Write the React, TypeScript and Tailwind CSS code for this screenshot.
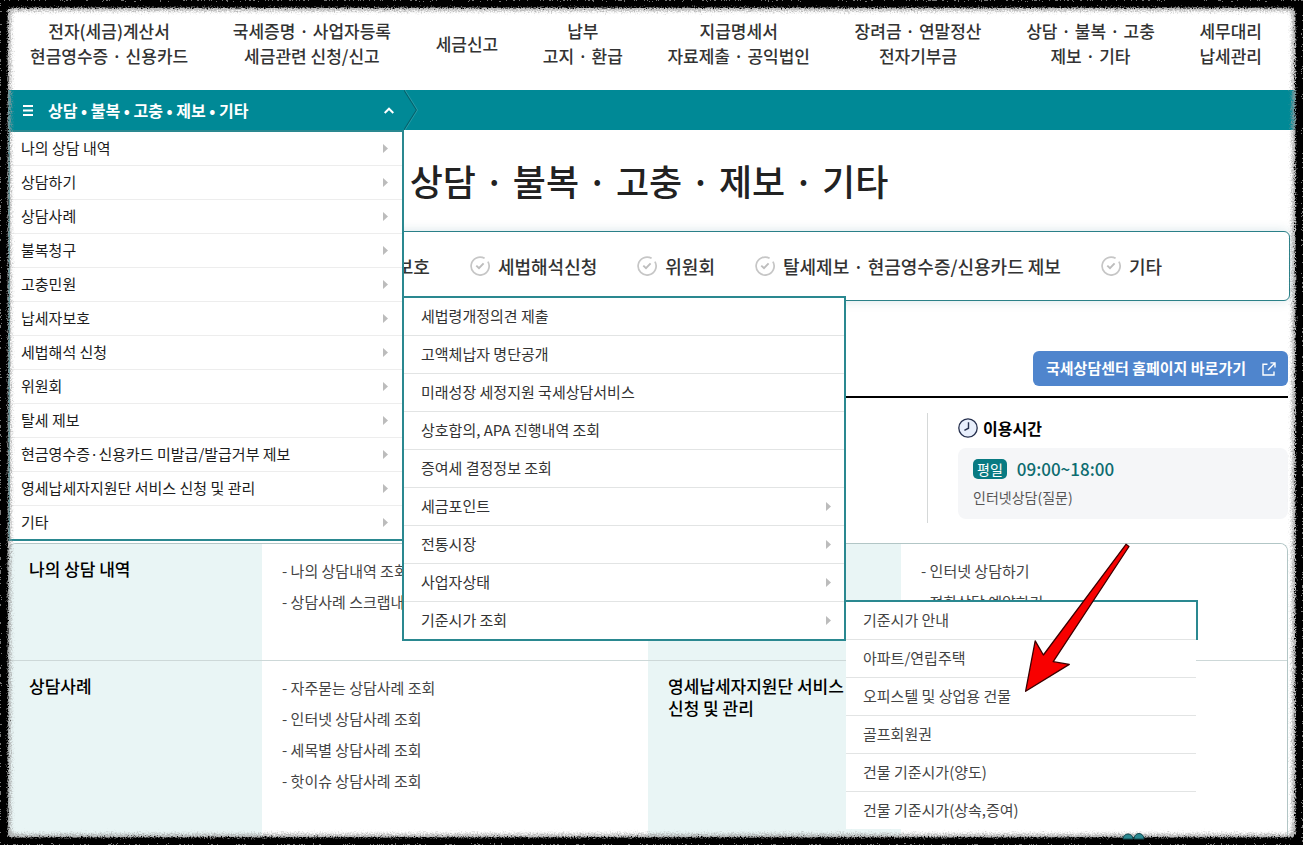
import React from 'react';

type Entry = { label: string; more?: boolean };

const NAV: string[][] = [
  ['전자(세금)계산서', '현금영수증 · 신용카드'],
  ['국세증명 · 사업자등록', '세금관련 신청/신고'],
  ['세금신고'],
  ['납부', '고지 · 환급'],
  ['지급명세서', '자료제출 · 공익법인'],
  ['장려금 · 연말정산', '전자기부금'],
  ['상담 · 불복 · 고충', '제보 · 기타'],
  ['세무대리', '납세관리'],
];

const MENU: string[] = [
  '나의 상담 내역',
  '상담하기',
  '상담사례',
  '불복청구',
  '고충민원',
  '납세자보호',
  '세법해석 신청',
  '위원회',
  '탈세 제보',
  '현금영수증·신용카드 미발급/발급거부 제보',
  '영세납세자지원단 서비스 신청 및 관리',
  '기타',
];

const SUBMENU: Entry[] = [
  { label: '세법령개정의견 제출' },
  { label: '고액체납자 명단공개' },
  { label: '미래성장 세정지원 국세상담서비스' },
  { label: '상호합의, APA 진행내역 조회' },
  { label: '증여세 결정정보 조회' },
  { label: '세금포인트', more: true },
  { label: '전통시장', more: true },
  { label: '사업자상태', more: true },
  { label: '기준시가 조회', more: true },
];

const LEAVES: string[] = [
  '기준시가 안내',
  '아파트/연립주택',
  '오피스텔 및 상업용 건물',
  '골프회원권',
  '건물 기준시가(양도)',
  '건물 기준시가(상속,증여)',
];

const TABS: string[] = ['납세자보호', '세법해석신청', '위원회', '탈세제보 · 현금영수증/신용카드 제보', '기타'];

function Triangle() {
  return (
    <svg className="h-[9px] w-[5px] shrink-0" viewBox="0 0 5 9" aria-hidden="true">
      <path d="M0 0 L5 4.5 L0 9 Z" fill="#bcbcbc" />
    </svg>
  );
}

function CheckCircle() {
  return (
    <svg className="size-5 shrink-0" viewBox="0 0 20 20" fill="none" aria-hidden="true">
      <path d="M17.9 5.6 A9 9 0 1 1 14.6 2.3" stroke="#c6c6c6" strokeWidth="1.7" />
      <path d="M6.3 9.6 L9 12.2 L13.6 7.4" stroke="#bdbdbd" strokeWidth="1.9" />
    </svg>
  );
}

function LeafMenu() {
  return (
    <ul className="absolute top-[302px] left-[442px] w-[352px] border-t-2 border-[#2a8890]">
      {LEAVES.map((label, i) => (
        <li key={label} className={i === 0 ? 'border-r-2 border-[#2a8890]' : 'pr-0.5'}>
          <a
            href="#"
            className={
              'flex items-center bg-white pl-[17px] text-[15px] text-[#444] ' +
              (i < LEAVES.length - 1 ? 'h-[38px] border-b border-[#e2e4e4]' : 'h-[37px]')
            }
          >
            {label}
          </a>
        </li>
      ))}
    </ul>
  );
}

function SubMenu() {
  return (
    <div className="absolute top-[164px] left-full w-[444px] border-2 border-[#2a8890] bg-white">
      <ul className="text-[15px] text-[#333]">
        {SUBMENU.map((entry) => (
          <li key={entry.label} className="border-b border-[#e2e4e4] last:border-b-0">
            <a href="#" className="flex h-[37px] items-center justify-between pr-[13px] pl-[17px]">
              {entry.label}
              {entry.more && <Triangle />}
            </a>
          </li>
        ))}
      </ul>
      <LeafMenu />
    </div>
  );
}

function SideMenu() {
  return (
    <div className="absolute top-full left-0 z-10 w-[396px] border-2 border-[#2a8890] bg-white">
      <ul className="text-[15px] text-[#1c1c1c]">
        {MENU.map((label) => (
          <li key={label} className="border-b border-[#ededed] last:border-b-0">
            <a href="#" className="flex h-[33px] items-center justify-between pr-[14px] pl-[11px]">
              {label}
              <Triangle />
            </a>
          </li>
        ))}
      </ul>
      <SubMenu />
    </div>
  );
}

function Cell({ title, items }: { title: string; items: string[] }) {
  return (
    <div className="grid grid-cols-[253px_1fr]">
      <h2 className="bg-[#e9f5f5] px-5 pt-[14px] text-[17px] leading-[22px] font-medium whitespace-pre text-black">
        {title}
      </h2>
      <ul className="bg-white pt-[11px] pl-5 text-[15px] leading-[31px] text-[#444]">
        {items.map((item) => (
          <li key={item}>- {item}</li>
        ))}
      </ul>
    </div>
  );
}

function TornEdge() {
  return (
    <svg className="pointer-events-none absolute inset-0 z-30 h-full w-full" aria-hidden="true">
      <defs>
        <filter id="rough" x="0" y="0" width="100%" height="100%" colorInterpolationFilters="sRGB">
          <feTurbulence type="fractalNoise" baseFrequency="0.7" numOctaves="2" seed="4" result="n" />
          <feGaussianBlur in="SourceGraphic" stdDeviation="0.6" result="b" />
          <feDisplacementMap in="b" in2="n" scale="7" xChannelSelector="R" yChannelSelector="G" />
        </filter>
        <filter id="haze" x="0" y="0" width="100%" height="100%" colorInterpolationFilters="sRGB">
          <feGaussianBlur in="SourceGraphic" stdDeviation="1.6" result="b" />
          <feTurbulence type="fractalNoise" baseFrequency="0.7" numOctaves="2" seed="9" result="n" />
          <feDisplacementMap in="b" in2="n" scale="8" xChannelSelector="R" yChannelSelector="G" />
        </filter>
      </defs>
      <rect width="100%" height="100%" rx="16" fill="none" stroke="#9c9c9c" strokeOpacity="0.75" strokeWidth="22" filter="url(#haze)" />
      <rect width="100%" height="100%" rx="12" fill="none" stroke="#000" strokeWidth="15" filter="url(#rough)" />
    </svg>
  );
}

export default function App() {
  return (
    <div className="relative h-screen overflow-hidden bg-black py-2 pr-[7px] pl-2 font-['Noto_Sans_CJK_KR','Noto_Sans',sans-serif]">
      <div className="relative flex h-full flex-col overflow-hidden bg-white">
        <header className="h-[82px] shrink-0 pt-[10px]">
          <nav className="flex h-[50px] items-center justify-between pr-[34px] pl-[22px]">
            {NAV.map((lines) => (
              <a
                key={lines[0]}
                href="#"
                className="text-center text-[17px] leading-[25px] font-medium whitespace-nowrap text-[#333]"
              >
                {lines.map((line) => (
                  <span key={line} className="block">
                    {line}
                  </span>
                ))}
              </a>
            ))}
          </nav>
        </header>

        <div className="relative flex h-10 shrink-0 bg-[#008996]">
          <button className="flex w-[396px] items-center pr-[10px] pl-[15px] text-white">
            <svg className="h-[11px] w-[10px]" viewBox="0 0 10 11" aria-hidden="true">
              <path d="M0 1 H10 M0 5.5 H10 M0 10 H10" stroke="#fff" strokeWidth="2" />
            </svg>
            <span className="ml-[15px] flex-1 text-left text-base font-bold">상담 • 불복 • 고충 • 제보 • 기타</span>
            <svg className="h-[7px] w-[10px]" viewBox="0 0 10 7" fill="none" aria-hidden="true">
              <path d="M0.7 6 L5 1.7 L9.3 6" stroke="#fff" strokeWidth="2" />
            </svg>
          </button>
          <svg className="h-10 w-[14px]" viewBox="0 0 14 40" fill="none" aria-hidden="true">
            <path d="M0 0 L12.5 20 L0 40" stroke="#06626c" strokeWidth="1.2" />
            <path d="M1 0 L13.5 20 L1 40" stroke="#3aa6b0" strokeWidth="0.7" />
          </svg>
          <SideMenu />
        </div>

        <main className="flex min-h-0 flex-1 flex-col">
          <h1 className="mr-[6px] flex h-[101px] shrink-0 justify-center pt-5 text-4xl leading-[60px] font-medium text-[#222]">
            상담 · 불복 · 고충 · 제보 · 기타
          </h1>
          <nav className="mr-[6px] flex h-[70px] shrink-0 items-center justify-end gap-10 rounded-md border border-[#2a8088] bg-white pr-[127px] text-lg font-medium text-[#333] shadow-[0_0_12px_rgba(0,90,110,0.16)]">
            {TABS.map((tab) => (
              <a key={tab} href="#" className="flex items-center gap-2 whitespace-nowrap">
                <CheckCircle />
                {tab}
              </a>
            ))}
          </nav>

          <section className="mt-[50px] mr-2 flex shrink-0 flex-col">
            <a
              href="#"
              className="flex h-[35px] items-center gap-4 self-end rounded-md bg-[#4f85cd] pr-3 pl-[13px] text-[15px] font-bold text-white"
            >
              국세상담센터 홈페이지 바로가기
              <svg className="size-[14px]" viewBox="0 0 14 14" fill="none" stroke="#fff" strokeWidth="1.4" aria-hidden="true">
                <path d="M5.5 2.2 H1 V13 H12 V9.5" />
                <path d="M8.4 0.9 H13 V5.4 M13 0.9 L6 8" />
              </svg>
            </a>
            <div className="mt-[10px] border-t-2 border-black pt-[15px]">
              <div className="ml-auto flex h-[110px] w-[361px] flex-col border-l border-[#d5d8d8] pl-[30px]">
                <h2 className="flex h-[30px] items-center gap-[5px] text-base font-bold text-black">
                  <svg className="size-5" viewBox="0 0 20 20" fill="none" aria-hidden="true">
                    <circle cx="10" cy="10" r="9.2" fill="#e8effc" stroke="#26304e" strokeWidth="1.3" />
                    <path d="M10.5 4.2 V10.2 L6.4 12.3" stroke="#26304e" strokeWidth="1.4" />
                  </svg>
                  이용시간
                </h2>
                <div className="mt-[5px] h-[71px] rounded-lg bg-[#f5f6f8] px-[15px] pt-[7px]">
                  <p className="flex h-7 items-center gap-[10px] text-[17px] font-medium text-[#0d6c70]">
                    <span className="flex h-5 items-center rounded-[5px] bg-[#087a82] px-1 text-sm font-normal text-white">평일</span>
                    09:00~18:00
                  </p>
                  <p className="text-sm leading-[28px] text-[#555]">인터넷상담(질문)</p>
                </div>
              </div>
            </div>
          </section>

          <section className="mt-5 mr-2 grid min-h-0 flex-1 grid-cols-2 grid-rows-[117px_1fr] overflow-hidden rounded-t-lg border border-b-0 border-[#b2c6c6]">
            <div className="grid border-b border-[#cdd8d8]">
              <Cell title="나의 상담 내역" items={['나의 상담내역 조회', '상담사례 스크랩내역']} />
            </div>
            <div className="grid border-b border-[#cdd8d8]">
              <Cell title="상담하기" items={['인터넷 상담하기', '전화상담 예약하기']} />
            </div>
            <Cell
              title="상담사례"
              items={['자주묻는 상담사례 조회', '인터넷 상담사례 조회', '세목별 상담사례 조회', '핫이슈 상담사례 조회']}
            />
            <Cell title={'영세납세자지원단 서비스\n신청 및 관리'} items={[]} />
          </section>
        </main>
      </div>

      <svg
        className="pointer-events-none absolute top-[540px] left-[1020px] z-20 h-[156px] w-[114px]"
        viewBox="1020 540 114 156"
        aria-hidden="true"
      >
        <path
          d="M1126 544.3 L1129 546.5 L1053.2 661.7 L1069.3 664.4 L1025.6 691.3 L1035.2 640.8 L1043.4 655 Z"
          fill="#f80000"
          stroke="#3c0000"
          strokeWidth="1.3"
          strokeLinejoin="round"
        />
      </svg>
      <svg
        className="pointer-events-none absolute bottom-0 left-[1122px] z-40 h-[14px] w-6"
        viewBox="0 0 24 14"
        aria-hidden="true"
      >
        <path d="M1 8 A5 5 0 0 1 11 8 Z" fill="#2a8890" stroke="#12464c" />
        <path d="M12 8 A5 5.5 0 0 1 22 8 Z" fill="#2a8890" stroke="#12464c" />
      </svg>
      <TornEdge />
    </div>
  );
}
